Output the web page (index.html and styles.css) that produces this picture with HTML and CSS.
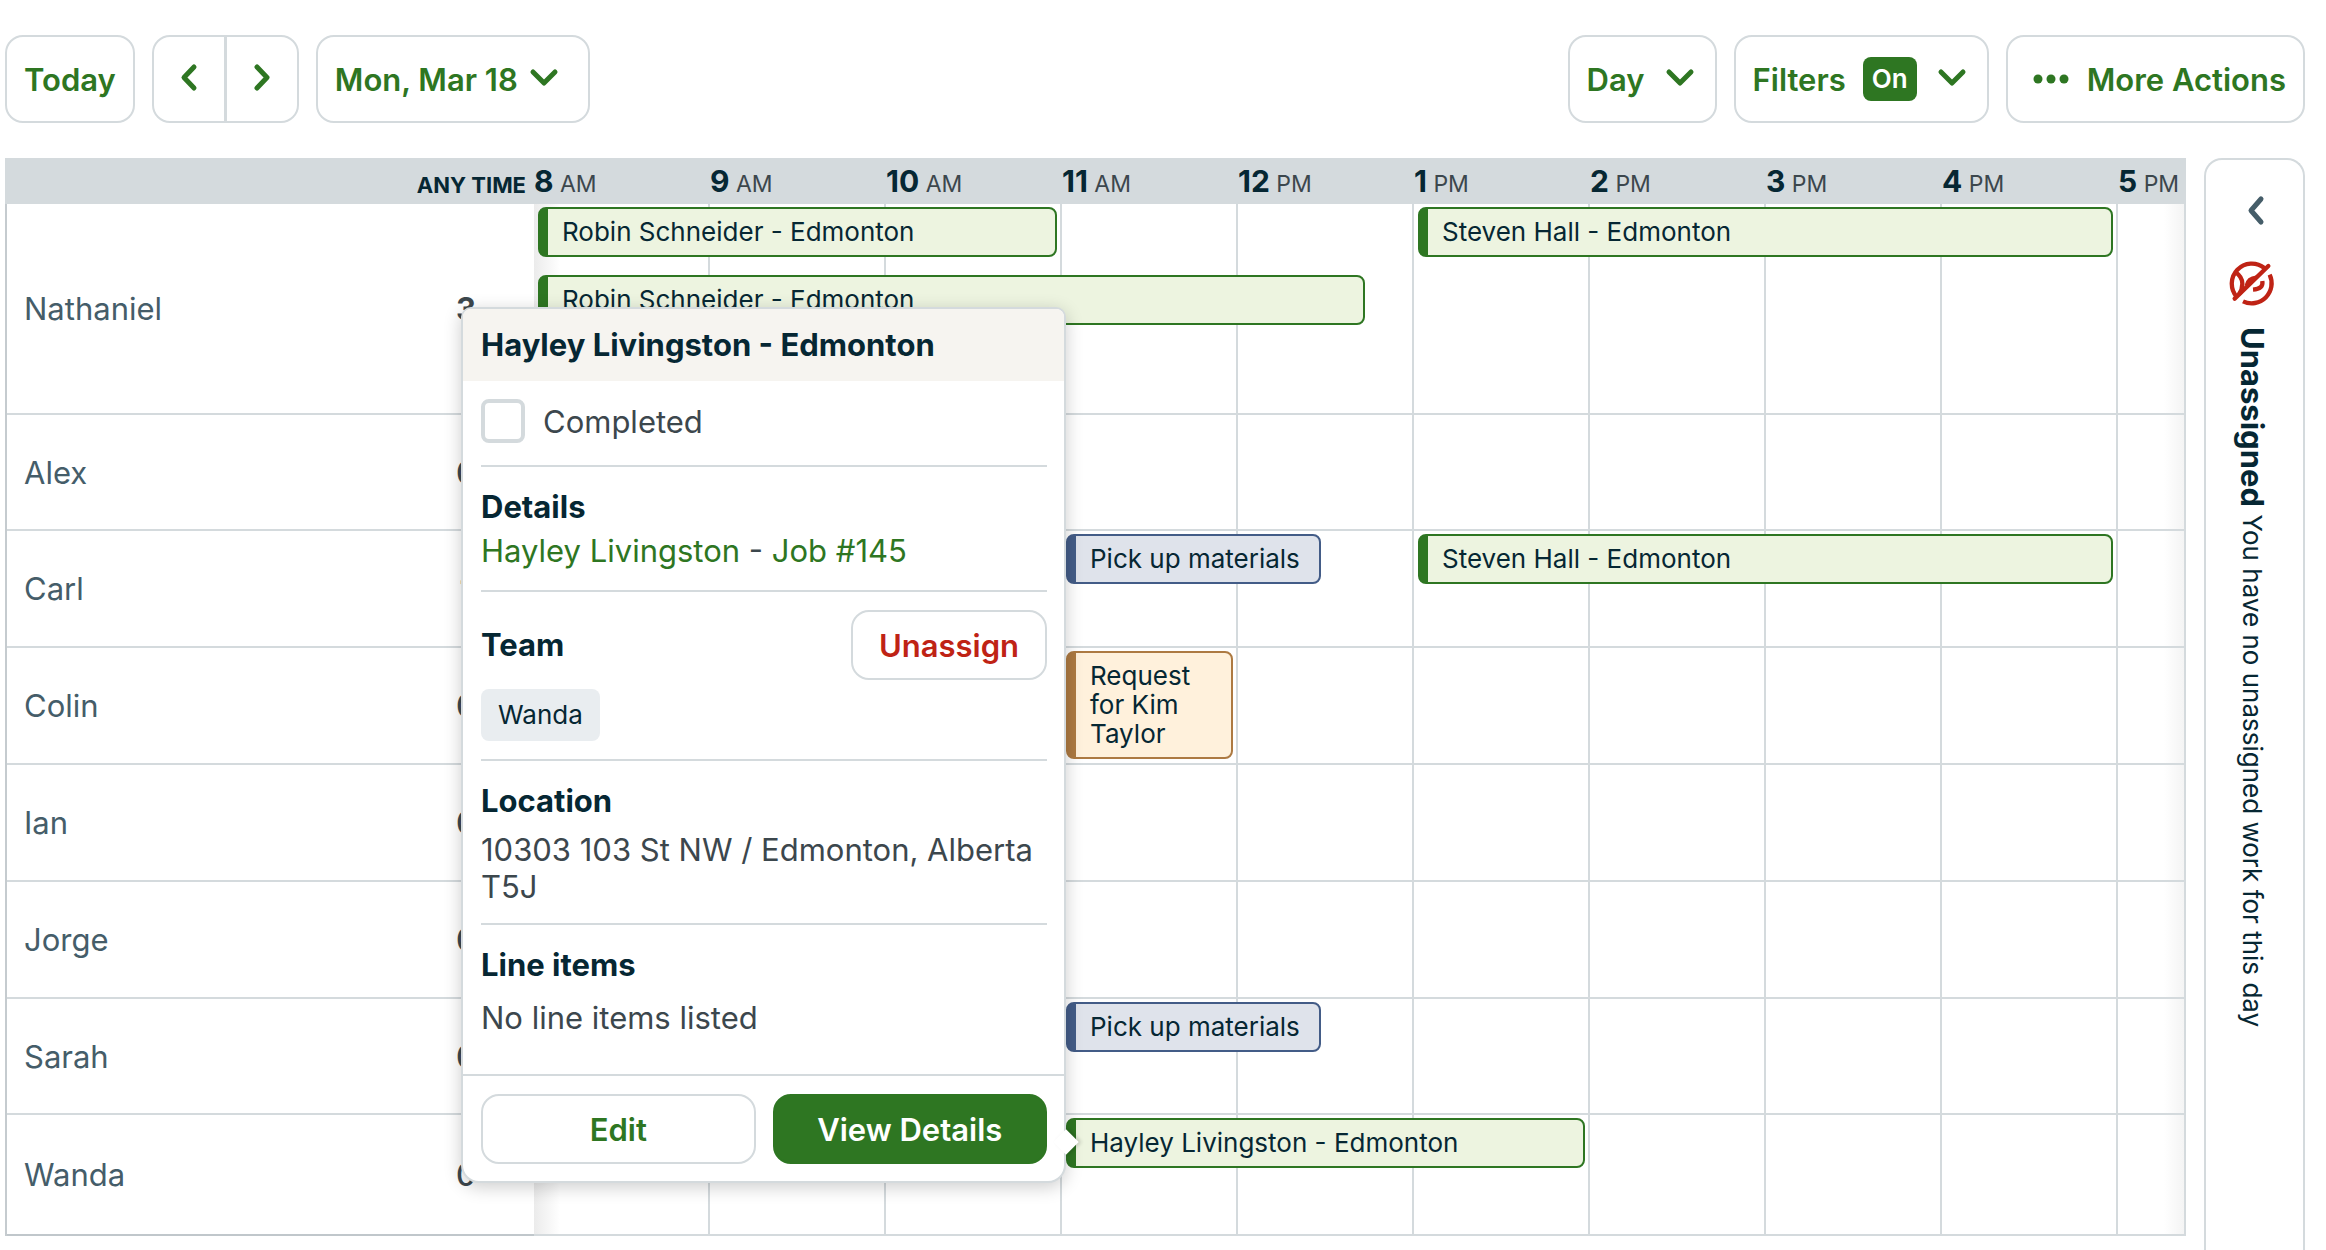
FILE: index.html
```html
<!DOCTYPE html>
<html lang="en">
<head>
<meta charset="utf-8">
<meta name="viewport" content="width=device-width, initial-scale=1">
<title>Schedule</title>
<link rel="stylesheet" href="styles.css">
</head>
<body>
<div class="page">
  <header class="toolbar">
    <div class="toolbar-group">
      <button class="button" type="button">Today</button>
      <div class="button-pair">
        <button class="pair-button" type="button" aria-label="Previous day"><svg class="icon" viewBox="0 0 36 36"><path d="M23 6 13 16.500 23 27"/></svg></button>
        <button class="pair-button" type="button" aria-label="Next day"><svg class="icon" viewBox="0 0 36 36"><path d="M13 6 23 16.500 13 27"/></svg></button>
      </div>
      <button class="button button-date" type="button">Mon, Mar 18<svg class="icon" viewBox="0 0 36 36"><path d="M7 11 18 22 29 11"/></svg></button>
    </div>
    <div class="toolbar-group">
      <div class="select-box">
        <select class="select" aria-label="View"><option>Day</option><option>Week</option><option>Month</option></select>
        <svg class="icon select-icon" viewBox="0 0 36 36"><path d="M7 11 18 22 29 11"/></svg>
      </div>
      <button class="button button-filters" type="button">Filters<span class="badge">On</span><svg class="icon" viewBox="0 0 36 36"><path d="M7 11 18 22 29 11"/></svg></button>
      <button class="button button-more" type="button"><svg class="icon-dots" viewBox="0 0 52 36"><circle cx="13" cy="18" r="4.500"/><circle cx="26" cy="18" r="4.500"/><circle cx="39" cy="18" r="4.500"/></svg>More Actions</button>
    </div>
  </header>

  <main class="layout">
    <section class="calendar" aria-label="Day schedule">
      <div class="calendar-head">
        <div class="any-time">ANY TIME</div>
        <div class="hours">
          <div class="hour"><b>8</b> AM</div><div class="hour"><b>9</b> AM</div><div class="hour"><b>10</b> AM</div><div class="hour"><b>11</b> AM</div><div class="hour"><b>12</b> PM</div><div class="hour"><b>1</b> PM</div><div class="hour"><b>2</b> PM</div><div class="hour"><b>3</b> PM</div><div class="hour"><b>4</b> PM</div><div class="hour"><b>5</b> PM</div>
        </div>
      </div>
      <div class="calendar-body">
        <div class="lines" aria-hidden="true"><i></i><i></i><i></i><i></i><i></i><i></i><i></i><i></i><i></i><i></i></div>
        <div class="row row-tall">
          <div class="person"><span>Nathaniel</span><span class="count count-some">3</span></div>
          <div class="track">
            <div class="event job from-8 to-11">Robin Schneider - Edmonton</div>
            <div class="event job from-8 to-1245">Robin Schneider - Edmonton</div>
            <div class="event job from-13 to-17 first">Steven Hall - Edmonton</div>
          </div>
        </div>
        <div class="row row-short"><div class="person"><span>Alex</span><span class="count">0</span></div><div class="track"></div></div>
        <div class="row">
          <div class="person"><span>Carl</span><span class="count">1</span></div>
          <div class="track">
            <div class="event task from-11 to-1230 first">Pick up materials</div>
            <div class="event job from-13 to-17 first">Steven Hall - Edmonton</div>
          </div>
        </div>
        <div class="row">
          <div class="person"><span>Colin</span><span class="count">0</span></div>
          <div class="track"><div class="event request from-11 to-12">Request for Kim Taylor</div></div>
        </div>
        <div class="row"><div class="person"><span>Ian</span><span class="count">0</span></div><div class="track"></div></div>
        <div class="row"><div class="person"><span>Jorge</span><span class="count">0</span></div><div class="track"></div></div>
        <div class="row row-short">
          <div class="person"><span>Sarah</span><span class="count">0</span></div>
          <div class="track"><div class="event task from-11 to-1230">Pick up materials</div></div>
        </div>
        <div class="row row-last">
          <div class="person"><span>Wanda</span><span class="count">0</span></div>
          <div class="track">
            <div class="event job from-11 to-14">Hayley Livingston - Edmonton
              <article class="popover">
                <h2 class="popover-title">Hayley Livingston - Edmonton</h2>
                <div class="popover-body">
                  <label class="completed"><input class="checkbox" type="checkbox">Completed</label>
                  <section class="section">
                    <h3 class="heading">Details</h3>
                    <p class="links"><a href="#client">Hayley Livingston</a> - <a href="#job">Job #145</a></p>
                  </section>
                  <section class="section">
                    <div class="team-head"><h3 class="heading">Team</h3><button class="button button-small button-danger" type="button">Unassign</button></div>
                    <span class="chip">Wanda</span>
                  </section>
                  <section class="section">
                    <h3 class="heading">Location</h3>
                    <p class="address">10303 103 St NW / Edmonton, Alberta T5J</p>
                  </section>
                  <section class="section">
                    <h3 class="heading">Line items</h3>
                    <p class="items">No line items listed</p>
                  </section>
                </div>
                <footer class="popover-foot">
                  <button class="button button-small" type="button">Edit</button>
                  <button class="button button-small button-primary" type="button">View Details</button>
                </footer>
              </article>
            </div>
          </div>
        </div>
      </div>
    </section>

    <aside class="unassigned">
      <button class="panel-toggle" type="button" aria-label="Expand panel"><svg class="icon" viewBox="0 0 36 36"><path d="M24 7 14 18.500 24 30"/></svg></button>
      <svg class="icon-unassigned" viewBox="0 0 138 138"><path d="M23 107A60 60 0 0 1 106 21"/><path d="M122 41A60 60 0 0 1 42 121"/><path d="M17 113 118 15" stroke-linecap="round"/><path d="M20 34Q40 48 40 68Q40 86 30 100"/><path d="M53 74Q58 52 82 50"/><path d="M100 60Q104 84 72 86"/></svg>
      <p class="panel-text"><strong>Unassigned</strong> You have no unassigned work for this day</p>
    </aside>
  </main>
</div>
</body>
</html>
```
FILE: styles.css
```css
:root {
  --green: #2e7622;
  --navy: #062733;
  --text: #3c474d;
  --slate: #455d69;
  --line: #d4dadd;
  --red: #bf2315;
}

* { box-sizing: border-box; }

body {
  margin: 0;
  background: #fff;
  color: var(--text);
  font-family: Inter, "Liberation Sans", sans-serif;
  font-size: 31px;
  line-height: 37px;
}

h2, h3, p { margin: 0; }

.page {
  display: flex;
  flex-direction: column;
  min-height: 100vh;
  padding: 35px 21px 0 5px;
}

/* Toolbar */
.toolbar { display: flex; justify-content: space-between; margin-bottom: 35px; }
.toolbar-group { display: flex; gap: 17px; }

.button {
  display: flex;
  align-items: center;
  justify-content: center;
  height: 88px;
  padding: 0 17px;
  border: 2px solid var(--line);
  border-radius: 18px;
  background: #fff;
  color: var(--green);
  font: 600 31px/37px Inter, "Liberation Sans", sans-serif;
  white-space: nowrap;
}
.button-date { gap: 8px; padding-right: 26px; }
.button-filters { gap: 17px; }
.button-more { gap: 10px; }
.button-small { height: 70px; }
.button-danger { color: var(--red); padding: 0 26px; }
.button-primary { border-color: var(--green); background: var(--green); color: #fff; }

.button-pair {
  display: flex;
  border: 2px solid var(--line);
  border-radius: 18px;
}
.pair-button {
  display: flex;
  align-items: center;
  justify-content: center;
  width: 70px;
  padding: 0;
  border: 0;
  background: none;
  color: var(--green);
}
.pair-button + .pair-button { width: 73px; border-left: 3px solid var(--line); }

.icon {
  flex: none;
  width: 36px;
  height: 36px;
  fill: none;
  stroke: currentColor;
  stroke-width: 5;
  stroke-linecap: round;
  stroke-linejoin: round;
}
.icon-dots { width: 52px; height: 36px; fill: currentColor; }

.badge {
  padding: 0 9px;
  border-radius: 8px;
  background: var(--green);
  color: #fff;
  font-size: 26px;
  line-height: 44px;
}

.select-box { position: relative; width: 149px; color: var(--green); }
.select {
  width: 100%;
  height: 88px;
  padding: 0 17px;
  border: 2px solid var(--line);
  border-radius: 18px;
  appearance: none;
  background: #fff;
  color: inherit;
  font: 600 31px/37px Inter, "Liberation Sans", sans-serif;
}
.select-icon { position: absolute; top: 26px; right: 19px; pointer-events: none; }

/* Calendar */
.layout { display: flex; flex: 1; gap: 18px; }
.calendar { flex: 1; align-self: flex-start; }

.calendar-head,
.row { display: grid; grid-template-columns: 529px 1fr; }
.calendar-head { height: 46px; padding-right: 2px; background: var(--line); color: var(--text); }
.hours,
.lines { display: grid; grid-template-columns: repeat(9, 176fr) 66fr; }
.any-time {
  padding: 9px 8px 0 0;
  color: var(--navy);
  font-size: 22px;
  font-weight: 700;
  text-align: right;
}
.hour { padding-top: 5px; font-size: 23px; white-space: nowrap; }
.hour b { color: var(--navy); font-size: 30px; font-weight: 700; }

.calendar-body {
  position: relative;
  border-right: 2px solid var(--line);
  border-left: 2px solid #c5cbcf;
}
.calendar-body .row { grid-template-columns: 527px 1fr; }

/* Hour rules and edge shading behind the events */
.lines { position: absolute; inset: 0 0 0 527px; }
.lines i { border-right: 2px solid var(--line); }
.lines i:last-child { border: 0; background: linear-gradient(to left, #f4f4f4, #fff 20px); }
.lines i:first-child { background: linear-gradient(to right, #ebebeb, #fff 26px); }

.row { position: relative; min-height: 117px; border-bottom: 2px solid var(--line); }
.row-tall { min-height: 211px; }
.row-short { min-height: 116px; }
.row-last { min-height: 121px; }
.row-last .person { margin-bottom: -2px; border-bottom: 2px solid #c0c7cb; }

.person {
  display: flex;
  align-items: center;
  justify-content: space-between;
  padding-left: 17px;
  color: var(--slate);
}
.count { width: 136px; color: var(--text); text-align: center; font-weight: 500; }
.count-some { font-weight: 700; }

.track {
  display: grid;
  grid-template-columns: repeat(37, 44fr) 22fr;
  align-content: start;
  row-gap: 18px;
  padding: 3px 0;
}
.event {
  position: relative;
  margin: 0 5px 0 4px;
  padding: 8px 10px 9px 14px;
  border: 2px solid;
  border-left-width: 10px;
  border-radius: 8px;
  color: var(--navy);
  font-size: 26px;
  line-height: 29px;
}
.job { border-color: var(--green); background: #edf4e0; }
.task { border-color: #435c87; background: #dfe3eb; }
.request { border-color: #ad7a42; background: #fff1dc; }
.first { grid-row: 1; }
.from-8 { grid-column-start: 1; }
.from-11 { grid-column-start: 13; }
.from-13 { grid-column-start: 21; }
.to-11 { grid-column-end: 13; }
.to-12 { grid-column-end: 17; }
.to-1230 { grid-column-end: 19; }
.to-1245 { grid-column-end: 20; }
.to-14 { grid-column-end: 25; }
.to-17 { grid-column-end: 37; }

/* Event popover */
.popover {
  position: absolute;
  right: 100%;
  bottom: -17px;
  z-index: 2;
  width: 605px;
  margin-right: 10px;
  border: 2px solid var(--line);
  border-radius: 10px 10px 18px 18px;
  background: #fff;
  box-shadow: 0 4px 18px rgba(0, 0, 0, 0.2);
  color: var(--text);
  font-size: 31px;
  line-height: 37px;
}
.popover::after {
  content: "";
  position: absolute;
  right: -11px;
  bottom: 30px;
  width: 18px;
  height: 18px;
  background: #fff;
  box-shadow: 2px -2px 4px rgba(0, 0, 0, 0.15);
  transform: rotate(45deg);
}
.popover-title {
  padding: 17px 18px 18px;
  border-radius: 8px 8px 0 0;
  background: #f6f4f0;
  color: var(--navy);
  font-size: 31px;
  font-weight: 700;
}
.popover-body { padding: 0 17px 0 18px; }
.completed { display: flex; align-items: center; gap: 18px; padding: 18px 0 22px; }
.checkbox {
  width: 44px;
  height: 44px;
  margin: 0;
  border: 4px solid var(--line);
  border-radius: 8px;
  appearance: none;
  background: #fff;
}
.section { padding: 18px 0; border-top: 2px solid var(--line); }
.heading { color: var(--navy); font-size: 31px; font-weight: 700; line-height: 44px; }
.links { line-height: 43px; }
.links a { color: var(--green); text-decoration: none; }
.team-head { display: flex; align-items: center; justify-content: space-between; margin-bottom: 9px; }
.chip {
  display: block;
  width: fit-content;
  padding: 0 17px;
  border-radius: 8px;
  background: #e9edf0;
  color: var(--navy);
  font-size: 26px;
  line-height: 52px;
}
.address { margin-top: 8px; }
.items { margin: 12px 0 20px; }
.popover-foot {
  display: grid;
  grid-template-columns: 1fr 1fr;
  gap: 17px;
  padding: 18px 17px 17px 18px;
  border-top: 2px solid var(--line);
}

/* Unassigned panel */
.unassigned {
  display: flex;
  flex-direction: column;
  align-items: center;
  width: 101px;
  padding-top: 32px;
  border: 2px solid var(--line);
  border-bottom: 0;
  border-radius: 18px 18px 0 0;
  color: var(--navy);
}
.panel-toggle { display: flex; padding: 0; border: 0; background: none; color: var(--slate); }
.icon-unassigned {
  width: 46px;
  height: 46px;
  margin: 33px 6px 20px 0;
  fill: none;
  stroke: var(--red);
  stroke-width: 13;
}
.panel-text { margin-right: 5px; writing-mode: vertical-rl; font-size: 26px; white-space: nowrap; }
.panel-text strong { font-size: 31px; font-weight: 700; }
```
